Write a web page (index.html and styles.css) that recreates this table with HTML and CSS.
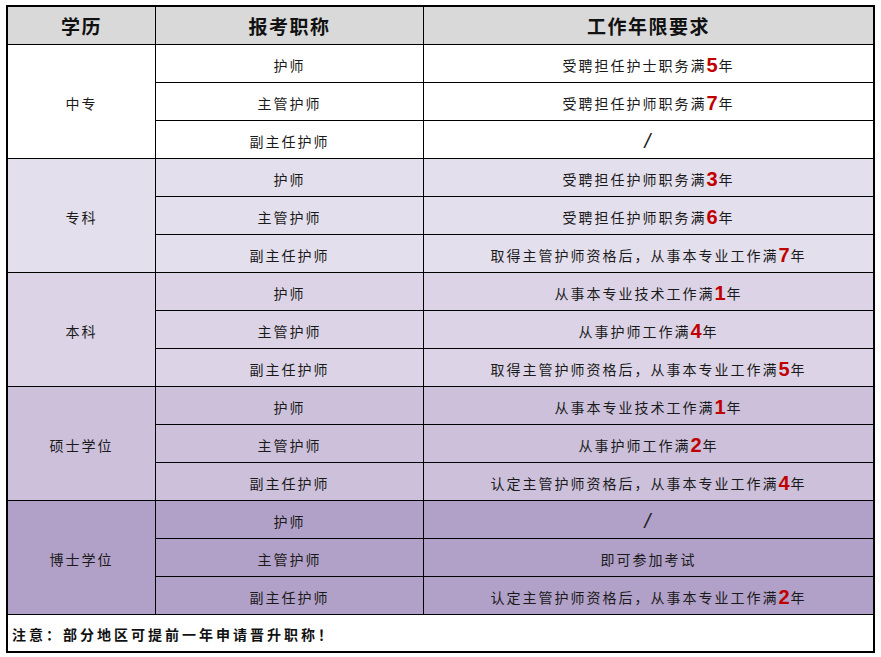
FILE: index.html
```html
<!DOCTYPE html>
<html lang="zh-CN">
<head>
<meta charset="utf-8">
<title>护理职称报考条件</title>
<link rel="stylesheet" href="styles.css">
</head>
<body>
<div class="sheet">
  <div class="cell head">学历</div>
  <div class="cell head">报考职称</div>
  <div class="cell head last">工作年限要求</div>

  <div class="cell edu g1">中专</div>
  <div class="cell title g1">护师</div>
  <div class="cell req g1">受聘担任护士职务满<b>5</b>年</div>
  <div class="cell title g1">主管护师</div>
  <div class="cell req g1">受聘担任护师职务满<b>7</b>年</div>
  <div class="cell title g1">副主任护师</div>
  <div class="cell req g1"><span class="slash">/</span></div>

  <div class="cell edu g2">专科</div>
  <div class="cell title g2">护师</div>
  <div class="cell req g2">受聘担任护师职务满<b>3</b>年</div>
  <div class="cell title g2">主管护师</div>
  <div class="cell req g2">受聘担任护师职务满<b>6</b>年</div>
  <div class="cell title g2">副主任护师</div>
  <div class="cell req g2">取得主管护师资格后，从事本专业工作满<b>7</b>年</div>

  <div class="cell edu g3">本科</div>
  <div class="cell title g3">护师</div>
  <div class="cell req g3">从事本专业技术工作满<b>1</b>年</div>
  <div class="cell title g3">主管护师</div>
  <div class="cell req g3">从事护师工作满<b>4</b>年</div>
  <div class="cell title g3">副主任护师</div>
  <div class="cell req g3">取得主管护师资格后，从事本专业工作满<b>5</b>年</div>

  <div class="cell edu g4">硕士学位</div>
  <div class="cell title g4">护师</div>
  <div class="cell req g4">从事本专业技术工作满<b>1</b>年</div>
  <div class="cell title g4">主管护师</div>
  <div class="cell req g4">从事护师工作满<b>2</b>年</div>
  <div class="cell title g4">副主任护师</div>
  <div class="cell req g4">认定主管护师资格后，从事本专业工作满<b>4</b>年</div>

  <div class="cell edu g5">博士学位</div>
  <div class="cell title g5">护师</div>
  <div class="cell req g5"><span class="slash">/</span></div>
  <div class="cell title g5">主管护师</div>
  <div class="cell req g5">即可参加考试</div>
  <div class="cell title g5">副主任护师</div>
  <div class="cell req g5">认定主管护师资格后，从事本专业工作满<b>2</b>年</div>

  <div class="note">注意：部分地区可提前一年申请晋升职称！</div>
</div>
</body>
</html>
```

FILE: styles.css
```css
html, body {
  margin: 0;
  padding: 0;
  background: #ffffff;
}

body {
  padding: 5px 0 0 6px;
  font-family: "Noto Sans CJK SC", "Liberation Sans", sans-serif;
  color: #1a1a1a;
}

.sheet {
  width: 865px;
  border: 2px solid #000;
  display: grid;
  grid-template-columns: 148px 268px 449px;
  grid-template-rows: 38px repeat(15, 38px) 36px;
}

.cell {
  display: flex;
  align-items: center;
  justify-content: center;
  border-right: 1px solid #000;
  border-bottom: 1px solid #000;
  font-size: 14px;
  letter-spacing: 2px;
  line-height: 1;
  padding-top: 2px;
}

.cell.last,
.req {
  border-right: none;
}

.head {
  background: #d9d9d9;
  font-size: 19px;
  font-weight: 700;
  letter-spacing: 1.5px;
  color: #111;
  padding-top: 0;
}

.edu {
  grid-column: 1;
  grid-row: span 3;
}

.title {
  grid-column: 2;
}

.req {
  grid-column: 3;
}

.req b {
  font-family: "Liberation Sans", Arial, sans-serif;
  font-size: 20px;
  font-weight: 700;
  color: #c00000;
  letter-spacing: 0;
  margin: 0 1px 0 0;
}

.slash {
  font-family: "Liberation Sans", Arial, sans-serif;
  font-size: 21px;
  font-style: italic;
  font-weight: 300;
  color: #222;
}

.g1 { background: #ffffff; }
.g2 { background: #e4dfec; }
.g3 { background: #dcd4e6; }
.g4 { background: #ccc0da; }
.g5 { background: #b1a0c7; }

.note {
  grid-column: 1 / 4;
  display: flex;
  align-items: center;
  padding: 1px 0 0 4px;
  font-size: 14px;
  font-weight: 700;
  letter-spacing: 3px;
  color: #111;
}
```
